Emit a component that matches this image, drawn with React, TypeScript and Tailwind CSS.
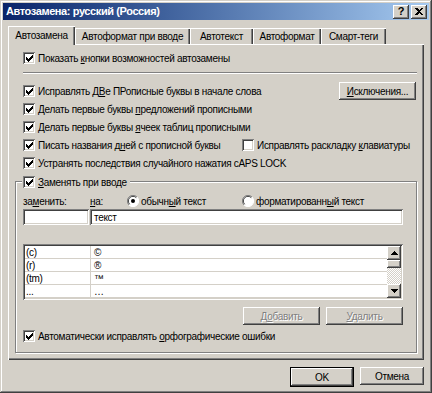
import React from "react";

const raised =
  "shadow-[inset_-1px_-1px_#404040,inset_1px_1px_#ffffff,inset_-2px_-2px_#808080,inset_2px_2px_#d4d0c8]";
const sunken =
  "shadow-[inset_1px_1px_#808080,inset_-1px_-1px_#ffffff,inset_2px_2px_#404040,inset_-2px_-2px_#d4d0c8]";

function Check({ on = true }: { on?: boolean }) {
  return (
    <span className={`inline-flex h-[12px] w-[12px] shrink-0 items-center justify-center bg-white ${sunken}`}>
      {on && (
        <svg width="7" height="7" viewBox="0 0 7 7" shapeRendering="crispEdges">
          <path d="M6 0h1v3h-1v1h-1v1h-1v1h-1v1h-1v-1h-1v-1h-1v-3h1v1h1v1h1v-1h1v-1h1z" fill="#000" />
        </svg>
      )}
    </span>
  );
}

function Radio({ on = false }: { on?: boolean }) {
  return (
    <svg width="12" height="12" viewBox="0 0 12 12" className="shrink-0">
      <circle cx="6" cy="6" r="5.5" fill="#ffffff" />
      <path d="M10 2A5.5 5.5 0 0 0 2 10" stroke="#808080" fill="none" />
      <path d="M9.3 2.7A4.5 4.5 0 0 0 2.7 9.3" stroke="#404040" fill="none" />
      <path d="M2 10A5.5 5.5 0 0 0 10 2" stroke="#ffffff" fill="none" />
      {on && <circle cx="6" cy="6" r="2" fill="#000" />}
    </svg>
  );
}

function Row({ children, className = "" }: { children: React.ReactNode; className?: string }) {
  return <div className={`flex h-[18px] items-center gap-[3px] pl-[8px] ${className}`}>{children}</div>;
}

function Btn({ children, w, disabled }: { children: React.ReactNode; w: string; disabled?: boolean }) {
  return (
    <div
      className={`flex h-[18px] items-center justify-center bg-[#d4d0c8] ${raised} ${w} ${
        disabled ? "text-[#808080] [text-shadow:1px_1px_#ffffff]" : ""
      }`}
    >
      {children}
    </div>
  );
}

function Arrow({ up }: { up?: boolean }) {
  return (
    <div className={`flex h-[14px] w-[14px] items-center justify-center bg-[#d4d0c8] ${raised}`}>
      <svg width="7" height="4" viewBox="0 0 7 4" shapeRendering="crispEdges">
        <path d={up ? "M3 0h1v1h1v1h1v1h1v1h-7v-1h1v-1h1v-1h1z" : "M0 0h7v1h-1v1h-1v1h-1v1h-1v-1h-1v-1h-1v-1h-1z"} fill="#000" />
      </svg>
    </div>
  );
}

const tabs = [
  { t: "Автозамена", w: "w-[67px]" },
  { t: "Автоформат при вводе", w: "w-[115px]" },
  { t: "Автотекст", w: "w-[63px]" },
  { t: "Автоформат", w: "w-[68px]" },
  { t: "Смарт-теги", w: "w-[65px]" },
];

const entries = [
  ["(c)", "©"],
  ["(r)", "®"],
  ["(tm)", "™"],
  ["...", "…"],
];

export default function App() {
  return (
    <div
      className={`h-[393px] w-[432px] whitespace-nowrap bg-[#d4d0c8] p-[3px] font-['Liberation_Sans',Arial,sans-serif] text-[10px] leading-[13px] tracking-[-0.3px] text-black shadow-[inset_-1px_-1px_#404040,inset_1px_1px_#d4d0c8,inset_-2px_-2px_#808080,inset_2px_2px_#ffffff]`}
    >
      {/* title bar */}
      <div className="flex h-[17px] items-center justify-between bg-gradient-to-r from-[#0a246a] to-[#a6caf0] pl-[3px] pr-[2px]">
        <span className="text-[11px] font-bold tracking-[-0.4px] text-white">Автозамена: русский (Россия)</span>
        <div className="flex gap-[2px]">
          <div className={`flex h-[14px] w-[16px] items-center justify-center bg-[#d4d0c8] text-[11px] font-bold ${raised}`}>?</div>
          <div className={`flex h-[14px] w-[16px] items-center justify-center bg-[#d4d0c8] ${raised}`}>
            <svg width="8" height="7" viewBox="0 0 8 7" shapeRendering="crispEdges">
              <path d="M0 0h2l2 2 2-2h2l-3 3.5 3 3.5h-2l-2-2-2 2h-2l3-3.5z" fill="#000" />
            </svg>
          </div>
        </div>
      </div>

      <div className="px-[5px]">
        {/* tabs */}
        <div className="mt-[6px] flex h-[18px] items-end">
          {tabs.map((tb, i) =>
            i === 0 ? (
              <div
                key={tb.t}
                className={`relative z-10 -mb-px flex h-[19px] items-center justify-center bg-[#d4d0c8] ${tb.w} shadow-[inset_1px_1px_#ffffff,inset_-1px_0_#404040,inset_-2px_0_#808080]`}
              >
                {tb.t}
              </div>
            ) : (
              <div
                key={tb.t}
                className={`flex h-[16px] items-center justify-center ${tb.w} shadow-[inset_1px_1px_#ffffff,inset_-1px_0_#404040,inset_-2px_0_#808080]`}
              >
                {tb.t}
              </div>
            )
          )}
        </div>

        {/* panel */}
        <div className="h-[316px] bg-[#d4d0c8] px-[7px] pt-[5px] shadow-[inset_1px_1px_#ffffff,inset_-1px_-1px_#404040,inset_-2px_-2px_#808080]">
          <Row>
            <Check />
            <span>
              Показать <u>к</u>нопки возможностей автозамены
            </span>
          </Row>
          <div className="ml-[8px] mt-[5px] h-[2px] border-t border-b border-t-[#808080] border-b-white" />

          <Row className="mt-[8px] justify-between pr-[1px]">
            <div className="flex items-center gap-[3px]">
              <Check />
              <span>
                Исправлять Д<u>В</u>е ПРописные буквы в начале слова
              </span>
            </div>
            <Btn w="w-[77px]">
              <span>
                <u>И</u>сключения...
              </span>
            </Btn>
          </Row>
          <Row>
            <Check />
            <span>
              Делать первые буквы <u>п</u>редложений прописными
            </span>
          </Row>
          <Row>
            <Check />
            <span>
              Делать первые буквы <u>я</u>чеек таблиц прописными
            </span>
          </Row>
          <Row>
            <div className="flex w-[216px] items-center gap-[3px]">
              <Check />
              <span>
                Писать названия д<u>н</u>ей с прописной буквы
              </span>
            </div>
            <Check on={false} />
            <span>
              Исправлять раскладку <u>к</u>лавиатуры
            </span>
          </Row>
          <Row>
            <Check />
            <span>
              Устранять после<u>д</u>ствия случайного нажатия cAPS LOCK
            </span>
          </Row>

          {/* group box */}
          <div className="relative mt-[9px] h-[172px] border border-[#808080] pl-[7px] pr-[13px] pt-[12px] shadow-[inset_1px_1px_#ffffff,1px_1px_#ffffff]">
            <div className="absolute left-[6px] top-[-7px] flex h-[14px] items-center gap-[3px] bg-[#d4d0c8] pl-[1px] pr-[3px]">
              <Check />
              <span>
                <u>З</u>аменять при вводе
              </span>
            </div>

            <div className="flex h-[14px] items-center">
              <span className="w-[67px]">
                за<u>м</u>енить:
              </span>
              <span className="w-[37px]">
                <u>н</u>а:
              </span>
              <div className="flex w-[115px] items-center gap-[2px]">
                <Radio on />
                <span>
                  обычн<u>ы</u>й текст
                </span>
              </div>
              <div className="flex items-center gap-[2px]">
                <Radio />
                <span>
                  форматированн<u>ы</u>й текст
                </span>
              </div>
            </div>

            <div className="mt-[1px] flex h-[16px] gap-px">
              <div className={`h-[16px] w-[66px] bg-white ${sunken}`} />
              <div className={`flex h-[16px] flex-1 items-center bg-white pl-[4px] ${sunken}`}>текст</div>
            </div>

            <div className={`mt-[19px] flex h-[56px] bg-white p-[2px] ${sunken}`}>
              <div className="flex-1">
                {entries.map(([a, b]) => (
                  <div key={a} className="flex h-[13px] items-center border-b border-[#d4d0c8]">
                    <span className="h-[13px] w-[66px] border-r border-[#d4d0c8] pl-[1px]">{a}</span>
                    <span className="pl-[3px]">{b}</span>
                  </div>
                ))}
              </div>
              <div className="flex w-[14px] flex-col bg-[repeating-conic-gradient(#ffffff_0_25%,#d4d0c8_0_50%)] bg-[length:2px_2px]">
                <Arrow up />
                <div className={`h-[8px] w-[14px] bg-[#d4d0c8] ${raised}`} />
                <div className="flex-1" />
                <Arrow />
              </div>
            </div>

            <div className="mt-[7px] flex justify-end gap-[6px]">
              <Btn w="w-[77px]" disabled>
                <span>
                  Д<u>о</u>бавить
                </span>
              </Btn>
              <Btn w="w-[77px]" disabled>
                <span>
                  <u>У</u>далить
                </span>
              </Btn>
            </div>

            <div className="mt-[3px] flex h-[16px] items-center gap-[3px]">
              <Check />
              <span>
                Автоматически исправлять <u>о</u>рфографические ошибки
              </span>
            </div>
          </div>
        </div>

        {/* dialog buttons */}
        <div className="mt-[7px] flex justify-end gap-[6px]">
          <div className="border border-black">
            <Btn w="w-[62px]">OK</Btn>
          </div>
          <Btn w="w-[64px]">Отмена</Btn>
        </div>
      </div>
    </div>
  );
}
